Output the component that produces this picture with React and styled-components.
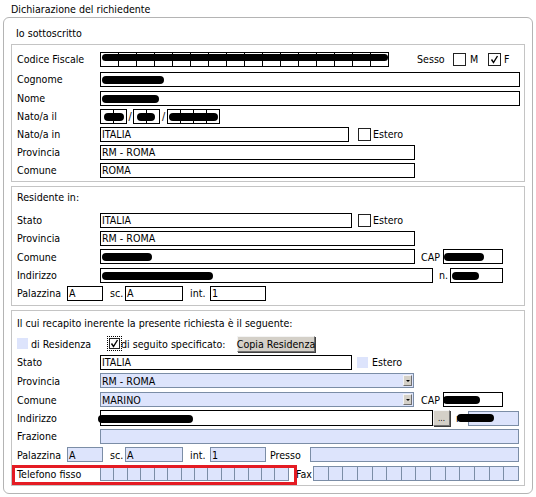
import React from "react";
import styled, { createGlobalStyle } from "styled-components";

const GlobalStyle = createGlobalStyle`
  body {
    margin: 0;
    background: #fff;
    color: #000;
    font-family: "DejaVu Sans Condensed", "DejaVu Sans", sans-serif;
    font-size: 10.6px;
  }
`;

const BLUE = "#dde4fc";
const BLUE_BORDER = "#7b8da6";

const Page = styled.div`
  padding: 2px 0 0 3px;
  width: 530px;
`;

const Title = styled.div`
  height: 15px;
  line-height: 15px;
  padding-left: 8px;
`;

const Outer = styled.div`
  box-sizing: border-box;
  width: 530px;
  border: 1px solid #b4b4b4;
  border-radius: 6px;
  padding: 0 6px 7px 7px;
`;

const Subtitle = styled.div`
  box-sizing: border-box;
  height: 26px;
  padding: 8px 0 0 5px;
  line-height: 14px;
`;

const Box = styled.div`
  box-sizing: border-box;
  width: 514px;
  border: 1px solid #c4c4c4;
  margin-top: ${(p) => p.$mt || 0}px;
  padding: ${(p) => p.$pt || 0}px 0 ${(p) => p.$pb || 0}px 0;
`;

const Row = styled.div`
  position: relative;
  display: flex;
  align-items: center;
  height: ${(p) => p.$h}px;
  margin-top: ${(p) => p.$mt || 0}px;
  padding-left: 5px;
  white-space: nowrap;
`;

const Label = styled.div`
  width: ${(p) => p.$w || 83}px;
  flex-shrink: 0;
`;

const Txt = styled.span`
  display: inline-block;
  flex-shrink: 0;
  width: ${(p) => (p.$w ? p.$w + "px" : "auto")};
  margin-left: ${(p) => p.$ml || 0}px;
  text-align: ${(p) => p.$align || "left"};
`;

const Field = styled.div`
  position: relative;
  box-sizing: border-box;
  flex-shrink: 0;
  display: flex;
  align-items: center;
  width: ${(p) => p.$w}px;
  height: ${(p) => p.$hh || 15}px;
  margin-left: ${(p) => p.$ml || 0}px;
  padding-left: 1px;
  border: 1px solid ${(p) => (p.$blue ? BLUE_BORDER : "#000")};
  background: ${(p) => (p.$blue ? BLUE : "#fff")};
`;

const Strip = styled.div`
  position: relative;
  box-sizing: border-box;
  flex-shrink: 0;
  display: flex;
  width: ${(p) => p.$w}px;
  height: 15px;
  margin-left: ${(p) => p.$ml || 0}px;
  border: 1px solid ${(p) => (p.$blue ? BLUE_BORDER : "#000")};
  background: ${(p) => (p.$blue ? BLUE : "#fff")};
`;

const Cell = styled.div`
  flex: 1;
  border-left: 1px solid ${(p) => (p.$blue ? BLUE_BORDER : "#000")};
  &:first-child {
    border-left: none;
  }
`;

const Blob = styled.span`
  display: block;
  position: absolute;
  top: ${(p) => p.$top ?? 3}px;
  left: ${(p) => p.$left || 0}px;
  width: ${(p) => p.$w}px;
  height: ${(p) => p.$bh || 8}px;
  border-radius: 5px;
  background: #000;
`;

const CheckBox = styled.span`
  box-sizing: border-box;
  flex-shrink: 0;
  display: inline-flex;
  align-items: center;
  justify-content: center;
  width: ${(p) => p.$size || 13}px;
  height: ${(p) => p.$size || 13}px;
  margin-left: ${(p) => p.$ml || 0}px;
  border: 1px solid #222;
  background: #fff;
`;

const Focus = styled.span`
  flex-shrink: 0;
  display: inline-flex;
  padding: 1px;
  border: 1px dotted #000;
  margin-left: ${(p) => p.$ml || 0}px;
`;

const BlueSquare = styled.span`
  flex-shrink: 0;
  width: 11px;
  height: 11px;
  margin-left: ${(p) => p.$ml || 0}px;
  background: ${BLUE};
`;

const GrayButton = styled.div`
  box-sizing: border-box;
  flex-shrink: 0;
  display: flex;
  align-items: center;
  justify-content: center;
  width: ${(p) => p.$w}px;
  height: 16px;
  margin-left: ${(p) => p.$ml || 0}px;
  background: #d4d0c8;
  border: 1px solid;
  border-color: #f4f4f4 #6f6f6f #6f6f6f #f4f4f4;
  box-shadow: 1px 1px 0 #404040;
  font-size: ${(p) => p.$fs || 10.6}px;
`;

const ArrowBox = styled.span`
  position: absolute;
  right: 1px;
  top: 1px;
  box-sizing: border-box;
  width: 9px;
  height: 11px;
  background: #d4d0c8;
  border: 1px solid;
  border-color: #f4f4f4 #6f6f6f #6f6f6f #f4f4f4;
  display: flex;
  align-items: center;
  justify-content: center;
  &::after {
    content: "";
    border-left: 2px solid transparent;
    border-right: 2px solid transparent;
    border-top: 2px solid #000;
  }
`;

const RedFrame = styled.div`
  position: absolute;
  left: 0;
  top: 1px;
  box-sizing: border-box;
  width: 285px;
  height: 20px;
  border: 3px solid #e41b23;
  pointer-events: none;
`;

const Tick = () => (
  <svg width="9" height="9" viewBox="0 0 9 9">
    <path d="M1.5 4.5 L3.5 7.5 L7.5 1" fill="none" stroke="#000" strokeWidth="1.4" />
  </svg>
);

const Cells = ({ n, w, ml, blue, children }) => (
  <Strip $w={w} $ml={ml} $blue={blue}>
    {Array.from({ length: n }).map((_, i) => (
      <Cell key={i} $blue={blue} />
    ))}
    {children}
  </Strip>
);

export default function App() {
  return (
    <Page>
      <GlobalStyle />
      <Title>Dichiarazione del richiedente</Title>
      <Outer>
        <Subtitle>Io sottoscritto</Subtitle>
        <Box $pt={4} $pb={2}>
          <Row $h={20}>
            <Label>Codice Fiscale</Label>
            <Cells n={16} w={289}>
              <Blob $w={286} $left={1} $top={1} $bh={7} />
            </Cells>
            <Txt $ml={28} $w={36}>Sesso</Txt>
            <CheckBox />
            <Txt $ml={4} $w={18}>M</Txt>
            <CheckBox>
              <Tick />
            </CheckBox>
            <Txt $ml={3}>F</Txt>
          </Row>
          <Row $h={20}>
            <Label>Cognome</Label>
            <Field $w={420}>
              <Blob $w={62} $left={1} />
            </Field>
          </Row>
          <Row $h={18}>
            <Label>Nome</Label>
            <Field $w={420}>
              <Blob $w={57} $left={1} />
            </Field>
          </Row>
          <Row $h={18}>
            <Label>Nato/a il</Label>
            <Cells n={2} w={27}>
              <Blob $w={20} $left={3} $top={3} />
            </Cells>
            <Txt $w={6} $align="center">/</Txt>
            <Cells n={2} w={27}>
              <Blob $w={18} $left={3} $top={3} />
            </Cells>
            <Txt $w={7} $align="center">/</Txt>
            <Cells n={4} w={53}>
              <Blob $w={49} $left={1} $top={3} />
            </Cells>
          </Row>
          <Row $h={18}>
            <Label>Nato/a in</Label>
            <Field $w={249}>ITALIA</Field>
            <CheckBox $ml={9} />
            <Txt $ml={2}>Estero</Txt>
          </Row>
          <Row $h={18}>
            <Label>Provincia</Label>
            <Field $w={315}>RM - ROMA</Field>
          </Row>
          <Row $h={18}>
            <Label>Comune</Label>
            <Field $w={315}>ROMA</Field>
          </Row>
        </Box>

        <Box $mt={4} $pb={3}>
          <Row $h={20}>Residente in:</Row>
          <Row $h={18} $mt={4}>
            <Label>Stato</Label>
            <Field $w={252}>ITALIA</Field>
            <CheckBox $ml={6} />
            <Txt $ml={2}>Estero</Txt>
          </Row>
          <Row $h={18}>
            <Label>Provincia</Label>
            <Field $w={315}>RM - ROMA</Field>
          </Row>
          <Row $h={19}>
            <Label>Comune</Label>
            <Field $w={315}>
              <Blob $w={50} $left={1} />
            </Field>
            <Txt $ml={6} $w={22}>CAP</Txt>
            <Field $w={60}>
              <Blob $w={40} $left={0} />
            </Field>
          </Row>
          <Row $h={18}>
            <Label>Indirizzo</Label>
            <Field $w={333}>
              <Blob $w={111} $left={1} />
            </Field>
            <Txt $ml={6} $w={11}>n.</Txt>
            <Field $w={53}>
              <Blob $w={27} $left={1} />
            </Field>
          </Row>
          <Row $h={18}>
            <Label $w={50}>Palazzina</Label>
            <Field $w={36}>A</Field>
            <Txt $ml={7} $w={15}>sc.</Txt>
            <Field $w={58}>A</Field>
            <Txt $ml={7} $w={20}>int.</Txt>
            <Field $w={56}>1</Field>
          </Row>
        </Box>

        <Box $mt={4} $pb={2}>
          <Row $h={23}>Il cui recapito inerente la presente richiesta è il seguente:</Row>
          <Row $h={19}>
            <BlueSquare />
            <Txt $ml={3} $w={76}>di Residenza</Txt>
            <Focus>
              <CheckBox $size={11}>
                <Tick />
              </CheckBox>
            </Focus>
            <Txt $w={116} $ml={-1}>di seguito specificato:</Txt>
            <GrayButton $w={78}>Copia Residenza</GrayButton>
          </Row>
          <Row $h={18}>
            <Label>Stato</Label>
            <Field $w={252}>ITALIA</Field>
            <BlueSquare $ml={5} />
            <Txt $ml={4}>Estero</Txt>
          </Row>
          <Row $h={19}>
            <Label>Provincia</Label>
            <Field $w={314} $blue>
              RM - ROMA
              <ArrowBox />
            </Field>
          </Row>
          <Row $h={19}>
            <Label>Comune</Label>
            <Field $w={314} $blue>
              MARINO
              <ArrowBox />
            </Field>
            <Txt $ml={7} $w={22}>CAP</Txt>
            <Field $w={60}>
              <Blob $w={37} $left={-1} />
            </Field>
          </Row>
          <Row $h={18}>
            <Label>Indirizzo</Label>
            <Field $w={333} $hh={16}>
              <Blob $w={95} $left={-3} $top={4} />
            </Field>
            <GrayButton $w={17} $fs={8}>...</GrayButton>
            <Txt $ml={6} $w={12}>n.</Txt>
            <Field $w={51} $blue>
              <Blob $w={37} $left={-12} $top={2} />
            </Field>
          </Row>
          <Row $h={18}>
            <Label>Frazione</Label>
            <Field $w={419} $blue />
          </Row>
          <Row $h={19}>
            <Label $w={50}>Palazzina</Label>
            <Field $w={36} $blue>A</Field>
            <Txt $ml={7} $w={15}>sc.</Txt>
            <Field $w={58} $blue>A</Field>
            <Txt $ml={7} $w={20}>int.</Txt>
            <Field $w={56} $blue>1</Field>
            <Txt $ml={4} $w={40}>Presso</Txt>
            <Field $w={209} $blue />
          </Row>
          <Row $h={19}>
            <Label>Telefono fisso</Label>
            <Cells n={14} w={189} blue />
            <Txt $ml={7} $w={17}>Fax</Txt>
            <Cells n={14} w={206} blue />
            <RedFrame />
          </Row>
        </Box>
      </Outer>
    </Page>
  );
}
